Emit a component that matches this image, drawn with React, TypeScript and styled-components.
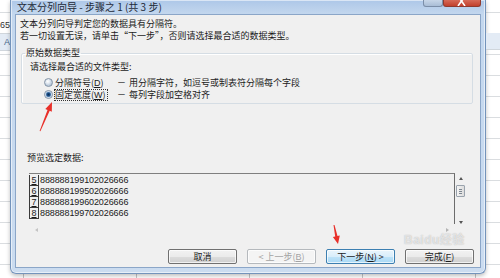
import React from 'react';
import styled, { createGlobalStyle } from 'styled-components';

const GlobalStyle = createGlobalStyle`
  html, body {
    margin: 0;
    padding: 0;
    background: #fff;
  }
  body {
    font-family: "Noto Sans CJK SC", "Liberation Sans", sans-serif;
    color: #1b1b1b;
  }
`;

const Desktop = styled.div`
  position: relative;
  width: 500px;
  height: 278px;
  overflow: hidden;
  display: flex;
  align-items: flex-start;
  background-color: #fff;
  background-image: linear-gradient(#dadde0 1px, transparent 1px),
    linear-gradient(90deg, #c4c6c8 1px, transparent 1px);
  background-size: 100% 21px, 113px 100%;
  background-position: 0 12px, 23px 0;
`;

const SheetStrip = styled.div<{ $width: number }>`
  width: ${(p) => p.$width}px;
  flex: none;
  display: flex;
  flex-direction: column;
  overflow: hidden;
`;

const SheetCell = styled.div<{ $top: number; $header?: boolean }>`
  height: 16px;
  margin-top: ${(p) => p.$top}px;
  font-family: "Liberation Sans", sans-serif;
  font-size: 9px;
  line-height: 16px;
  color: ${(p) => (p.$header ? '#4a6a8f' : '#333')};
  background: ${(p) => (p.$header ? '#e3ebf5' : '#fff')};
  border-bottom: 1px solid #d0d6dc;
  white-space: nowrap;
  text-align: right;
  overflow: hidden;
`;

const Window = styled.div`
  width: 476px;
  height: 274px;
  flex: none;
  box-sizing: border-box;
  display: flex;
  flex-direction: column;
  padding: 0 4px 5px;
  background: linear-gradient(180deg, #adc7e8 0, #c3d7ee 14px, #cbdcf0 100%);
  border: 1px solid #7393bb;
  border-top: none;
  border-radius: 0 0 6px 6px;
  box-shadow: inset 0 0 0 1px rgba(255, 255, 255, 0.55), 0 2px 4px rgba(0, 0, 0, 0.25);
`;

const TitleBar = styled.div`
  height: 14px;
  flex: none;
  display: flex;
  align-items: flex-start;
`;

const TitleText = styled.div`
  flex: 1;
  padding: 1px 0 0 2px;
  font-size: 10px;
  line-height: 11px;
  color: #1e2a38;
  white-space: nowrap;
`;

const CaptionButton = styled.div<{ $close?: boolean }>`
  width: ${(p) => (p.$close ? 38 : 20)}px;
  height: 7px;
  box-sizing: border-box;
  overflow: hidden;
  display: flex;
  justify-content: center;
  align-items: flex-end;
  border: 1px solid ${(p) => (p.$close ? '#8f3a2e' : '#7b8ea8')};
  border-top: none;
  border-radius: 0 0 3px 3px;
  background: ${(p) =>
    p.$close
      ? 'linear-gradient(180deg, #d66a58 0, #c2402c 100%)'
      : 'linear-gradient(180deg, #c7d6e8 0, #a9bdd6 100%)'};
`;

const Client = styled.div`
  flex: 1;
  display: flex;
  flex-direction: column;
  background: #f0f0f0;
  border: 1px solid #8ba6c8;
  min-height: 0;
`;

const Intro = styled.div`
  margin: 3px 0 0 4px;
  font-size: 9px;
  line-height: 12px;
  white-space: nowrap;
`;

const GroupBox = styled.fieldset`
  margin: 5px 7px 0 5px;
  padding: 0 0 3px 0;
  min-width: 0;
  border: 1px solid #d5dde4;
  border-radius: 2px;
  box-shadow: inset 1px 1px 0 #fff;
`;

const GroupLegend = styled.legend`
  margin-left: 3px;
  padding: 0 1px;
  font-size: 9px;
  line-height: 12px;
`;

const GroupBody = styled.div`
  padding-left: 8px;
  font-size: 9px;
`;

const Prompt = styled.div`
  margin-top: 2px;
  line-height: 12px;
  white-space: nowrap;
`;

const OptionList = styled.div`
  margin-top: 3px;
  padding-left: 14px;
  display: flex;
  flex-direction: column;
`;

const OptionRow = styled.div`
  height: 12px;
  display: flex;
  align-items: center;
  white-space: nowrap;
`;

const Radio = styled.span<{ $checked?: boolean }>`
  width: 9px;
  height: 9px;
  box-sizing: border-box;
  flex: none;
  border-radius: 50%;
  border: 1px solid #8393a6;
  background: ${(p) =>
    p.$checked
      ? 'radial-gradient(circle, #0b2f57 0, #1d4f86 1.6px, #7fa6cf 2.6px, #e6eef7 3.2px)'
      : 'radial-gradient(circle at 40% 35%, #ffffff 0, #e2e9f1 2px, #b9c9da 4px)'};
`;

const LabelCell = styled.div`
  width: 63px;
  flex: none;
  margin-left: 1px;
`;

const OptionLabel = styled.span<{ $focused?: boolean }>`
  display: inline-block;
  padding-right: 1px;
  line-height: 10px;
  border: 1px ${(p) => (p.$focused ? 'dotted #333' : 'solid transparent')};
`;

const Dash = styled.span`
  width: 9px;
  flex: none;
  text-align: center;
`;

const OptionDesc = styled.span`
  margin-left: 3px;
`;

const PreviewLabel = styled.div`
  margin: 48px 0 0 11px;
  font-size: 9px;
  line-height: 12px;
`;

const Preview = styled.div`
  margin: 9px 0 0 13px;
  width: 437px;
  height: 62px;
  display: grid;
  grid-template-columns: 1fr 11px;
  grid-template-rows: 51px 11px;
`;

const DataArea = styled.div`
  border-top: 1px solid #7f7f7f;
  border-right: 1px solid #6c6c6c;
  display: flex;
  flex-direction: column;
  padding-top: 1px;
  overflow: hidden;
`;

const DataRow = styled.div`
  height: 11px;
  display: flex;
  align-items: stretch;
  font-family: "Liberation Sans", sans-serif;
  font-size: 9px;
  line-height: 10px;
`;

const RowNum = styled.span`
  width: 10px;
  box-sizing: border-box;
  flex: none;
  text-align: center;
  border-left: 1px solid #3a3a3a;
  border-right: 1px solid #3a3a3a;
  border-bottom: 1px solid #3a3a3a;
`;

const RowData = styled.span`
  margin-left: 1px;
  letter-spacing: -0.1px;
`;

const VScroll = styled.div`
  display: flex;
  flex-direction: column;
  align-items: center;
  padding-top: 4px;
`;

const Arrow = styled.span<{ $dir: 'up' | 'down' | 'left' | 'right'; $color?: string }>`
  width: 0;
  height: 0;
  flex: none;
  border: 2.5px solid transparent;
  ${(p) =>
    p.$dir === 'up'
      ? `border-bottom: 3px solid ${p.$color || '#555'}; border-top-width: 0;`
      : p.$dir === 'down'
      ? `border-top: 3px solid ${p.$color || '#555'}; border-bottom-width: 0;`
      : p.$dir === 'left'
      ? `border-right: 3px solid ${p.$color || '#555'}; border-left-width: 0;`
      : `border-left: 3px solid ${p.$color || '#555'}; border-right-width: 0;`}
`;

const Thumb = styled.div`
  margin-top: 5px;
  width: 9px;
  height: 12px;
  box-sizing: border-box;
  border: 1px solid #9aa3ad;
  border-radius: 1px;
  background: linear-gradient(90deg, #f4f4f4, #dcdcdc);
  display: flex;
  flex-direction: column;
  justify-content: center;
  gap: 1px;
  padding: 0 2px;
`;

const Grip = styled.span`
  height: 1px;
  background: #7c8690;
`;

const Spacer = styled.div`
  flex: 1;
`;

const HScroll = styled.div`
  display: flex;
  align-items: center;
  justify-content: space-between;
  padding: 0 6px;
`;

const ButtonBar = styled.div`
  margin-top: 14px;
  padding-right: 6px;
  display: flex;
  justify-content: flex-end;
  gap: 10px;
`;

const DialogButton = styled.div<{ $variant?: 'default' | 'disabled' }>`
  width: 69px;
  height: 15px;
  box-sizing: border-box;
  display: flex;
  align-items: center;
  justify-content: center;
  font-size: 9px;
  white-space: nowrap;
  border-radius: 2px;
  border: 1px solid
    ${(p) => (p.$variant === 'default' ? '#3c7fb1' : p.$variant === 'disabled' ? '#b5b9bd' : '#707070')};
  color: ${(p) => (p.$variant === 'disabled' ? '#a3a3a3' : '#1b1b1b')};
  background: ${(p) =>
    p.$variant === 'default'
      ? 'linear-gradient(180deg, #eaf5fc 0, #d9eefb 50%, #bfe3f8 51%, #a9d9f5 100%)'
      : p.$variant === 'disabled'
      ? '#f4f4f4'
      : 'linear-gradient(180deg, #f2f2f2 0, #ebebeb 50%, #dddddd 51%, #cfcfcf 100%)'};
  box-shadow: inset 0 0 0 1px rgba(255, 255, 255, 0.7);
`;

const Mnemonic = styled.span`
  text-decoration: underline;
  font-family: "Liberation Sans", sans-serif;
`;

const Annotations = styled.svg`
  position: absolute;
  left: 0;
  top: 0;
  pointer-events: none;
`;

const Watermark = styled.div`
  position: absolute;
  left: 404px;
  top: 234px;
  font-family: "Liberation Sans", "Noto Sans CJK SC", sans-serif;
  font-size: 12px;
  line-height: 13px;
  font-weight: bold;
  letter-spacing: 0.5px;
  color: rgba(255, 255, 255, 0.6);
  text-shadow: 0 0 1px rgba(110, 110, 110, 0.5);
  pointer-events: none;
`;

const rows = [
  { n: '5', v: '888888199102026666' },
  { n: '6', v: '888888199502026666' },
  { n: '7', v: '888888199602026666' },
  { n: '8', v: '888888199702026666' },
];

const App: React.FC = () => {
  return (
    <Desktop>
      <GlobalStyle />
      <SheetStrip $width={10}>
        <SheetCell $top={17}>65</SheetCell>
        <SheetCell $top={0} $header>
          A
        </SheetCell>
      </SheetStrip>
      <Window>
        <TitleBar>
          <TitleText>文本分列向导 - 步骤之 1 (共 3 步)</TitleText>
          <CaptionButton />
          <CaptionButton $close>
            <svg width="10" height="6" viewBox="0 0 10 6">
              <path d="M1 -4 L8 6 M8 -4 L1 6" stroke="#fff" strokeWidth="1.6" />
            </svg>
          </CaptionButton>
        </TitleBar>
        <Client>
          <Intro>
            文本分列向导判定您的数据具有分隔符。
            <br />
            若一切设置无误，请单击“下一步”，否则请选择最合适的数据类型。
          </Intro>
          <GroupBox>
            <GroupLegend>原始数据类型</GroupLegend>
            <GroupBody>
              <Prompt>请选择最合适的文件类型:</Prompt>
              <OptionList>
                <OptionRow>
                  <Radio />
                  <LabelCell>
                    <OptionLabel>
                      分隔符号(<Mnemonic>D</Mnemonic>)
                    </OptionLabel>
                  </LabelCell>
                  <Dash>－</Dash>
                  <OptionDesc>用分隔字符，如逗号或制表符分隔每个字段</OptionDesc>
                </OptionRow>
                <OptionRow>
                  <Radio $checked />
                  <LabelCell>
                    <OptionLabel $focused>
                      固定宽度(<Mnemonic>W</Mnemonic>)
                    </OptionLabel>
                  </LabelCell>
                  <Dash>－</Dash>
                  <OptionDesc>每列字段加空格对齐</OptionDesc>
                </OptionRow>
              </OptionList>
            </GroupBody>
          </GroupBox>
          <PreviewLabel>预览选定数据:</PreviewLabel>
          <Preview>
            <DataArea>
              {rows.map((r) => (
                <DataRow key={r.n}>
                  <RowNum>
                    <u>{r.n}</u>
                  </RowNum>
                  <RowData>{r.v}</RowData>
                </DataRow>
              ))}
            </DataArea>
            <VScroll>
              <Arrow $dir="up" />
              <Thumb>
                <Grip />
                <Grip />
                <Grip />
              </Thumb>
              <Spacer />
              <Arrow $dir="down" />
            </VScroll>
            <HScroll>
              <Arrow $dir="left" $color="#c4c4c4" />
              <Arrow $dir="right" $color="#b4b4b4" />
            </HScroll>
          </Preview>
          <ButtonBar>
            <DialogButton>取消</DialogButton>
            <DialogButton $variant="disabled">
              &lt; 上一步(<Mnemonic>B</Mnemonic>)
            </DialogButton>
            <DialogButton $variant="default">
              下一步(<Mnemonic>N</Mnemonic>) &gt;
            </DialogButton>
            <DialogButton>
              完成(<Mnemonic>F</Mnemonic>)
            </DialogButton>
          </ButtonBar>
        </Client>
      </Window>
      <SheetStrip $width={14}>
        <SheetCell $top={33} $header />
      </SheetStrip>
      <Watermark>Baidu经验</Watermark>
      <Annotations width="500" height="278" viewBox="0 0 500 278">
        <polygon
          points="40.4,131.2 49.7,110.8 51.8,111.7 52,102 45.3,109 47.5,109.9 39.6,130.9"
          fill="#e8302a"
        />
        <polygon
          points="334.5,224.9 337.5,235.9 339.8,235.5 338,244 332.9,236.9 335.2,236.4 333.5,225.1"
          fill="#e8302a"
        />
      </Annotations>
    </Desktop>
  );
};

export default App;
